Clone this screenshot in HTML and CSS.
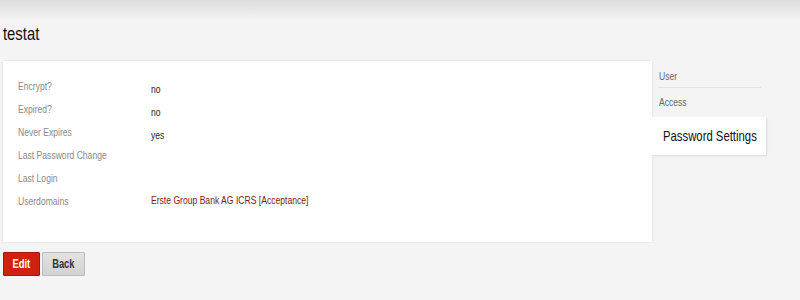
FILE: index.html
```html
<!DOCTYPE html>
<html>
<head>
<meta charset="utf-8">
<link rel="stylesheet" href="styles.css">
</head>
<body>
<div class="topbar"></div>
<h1 class="title"><span class="nr">testat</span></h1>
<div class="layout">
  <div class="card">
    <div class="row"><span class="label"><span class="nr">Encrypt?</span></span><span class="value"><span class="nr">no</span></span></div>
    <div class="row"><span class="label"><span class="nr">Expired?</span></span><span class="value"><span class="nr">no</span></span></div>
    <div class="row"><span class="label"><span class="nr">Never Expires</span></span><span class="value"><span class="nr">yes</span></span></div>
    <div class="row"><span class="label"><span class="nr">Last Password Change</span></span><span class="value"></span></div>
    <div class="row"><span class="label"><span class="nr">Last Login</span></span><span class="value"></span></div>
    <div class="row"><span class="label"><span class="nr">Userdomains</span></span><span class="value link"><span class="nr">Erste Group Bank AG ICRS [Acceptance]</span></span></div>
  </div>
  <div class="side">
    <div class="side-item"><span class="nr">User</span></div>
    <div class="side-item"><span class="nr">Access</span></div>
    <div class="side-active"><span class="nr">Password Settings</span></div>
  </div>
</div>
<div class="buttons">
  <button class="btn btn-edit"><span class="nr">Edit</span></button>
  <button class="btn btn-back"><span class="nr">Back</span></button>
</div>
</body>
</html>
```

FILE: styles.css
```css
html, body {
  margin: 0;
  padding: 0;
}
body {
  background: #f4f4f4;
  font-family: "Liberation Sans", Arial, sans-serif;
  width: 800px;
  height: 300px;
  overflow: hidden;
}
.nr {
  display: inline-block;
  white-space: nowrap;
  transform: scaleX(0.78);
  transform-origin: 0 50%;
}
.topbar {
  height: 20px;
  background: linear-gradient(#dcdcdc, #f4f4f4);
}
.title {
  margin: 0;
  padding: 3px 0 0 3px;
  height: 38px;
  font-size: 19px;
  font-weight: normal;
  color: #111;
  line-height: 22px;
}
.layout {
  display: flex;
  align-items: flex-start;
  padding-left: 3px;
}
.card {
  width: 634px;
  height: 167px;
  background: #fff;
  box-shadow: 0 0 2px rgba(0,0,0,0.12);
  padding: 14px 0 0 15px;
  box-sizing: content-box;
}
.row {
  display: flex;
  height: 23px;
  align-items: center;
  font-size: 11px;
}
.label {
  width: 133px;
  flex: none;
  color: #8a8a8a;
  position: relative;
  top: -1px;
}
.value {
  color: #222;
  position: relative;
  top: 2px;
}
.value.link {
  color: #7a1a10;
  top: -2px;
}
.side {
  width: 115px;
  padding-top: 7px;
}
.side-item {
  margin-left: 6px;
  width: 102px;
  font-size: 11px;
  color: #666;
  padding: 0 0 0 1px;
  height: 23px;
  line-height: 16px;
}
.side-item:first-child {
  border-bottom: 1px solid #e2e2e2;
  height: 19px;
  margin-bottom: 6px;
}
.side-active {
  margin-left: -1px;
  background: #fff;
  font-size: 15px;
  color: #111;
  height: 38px;
  line-height: 38px;
  padding-left: 12px;
  width: 103px;
  box-shadow: 1px 1px 2px rgba(0,0,0,0.1);
}
.side-active .nr {
  transform: scaleX(0.755);
}
.buttons {
  display: flex;
  gap: 2px;
  padding: 10px 0 0 3px;
}
.btn {
  font-family: "Liberation Sans", Arial, sans-serif;
  font-size: 12px;
  height: 24px;
  padding: 0;
  border-radius: 1px;
  cursor: pointer;
  text-align: center;
}
.btn .nr {
  transform-origin: 50% 50%;
}
.btn-edit {
  width: 37px;
  background: #d0200f;
  border: 1px solid #a8150a;
  color: #fff;
  font-weight: bold;
}
.btn-back {
  width: 43px;
  background: linear-gradient(#e2e2e2, #d2d2d2);
  border: 1px solid #bdbdbd;
  color: #333;
  font-weight: bold;
}
```
